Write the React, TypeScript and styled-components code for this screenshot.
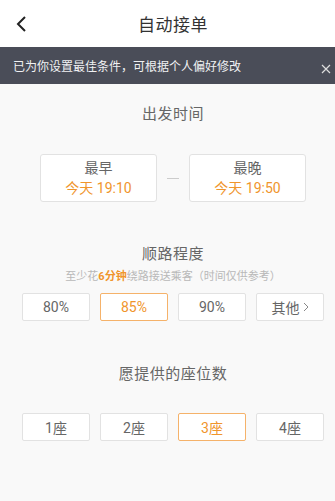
import React from "react";
import styled, { createGlobalStyle } from "styled-components";

const Global = createGlobalStyle`
  html, body { margin: 0; padding: 0; background: #f9f9f9; }
  body { font-family: "Roboto", "Noto Sans CJK SC", sans-serif; }
  * { box-sizing: border-box; }
`;

const Page = styled.div`
  width: 335px;
  height: 501px;
  background: #f9f9f9;
  overflow: hidden;
`;

const Header = styled.div`
  height: 47px;
  background: #fff;
  display: flex;
  align-items: center;
  justify-content: center;
  padding-left: 11px;
  position: relative;
`;

const Title = styled.div`
  font-size: 17px;
  color: #333;
  letter-spacing: 0.5px;
`;

const Back = styled.div`
  position: absolute;
  left: 15px;
  top: 15px;
  width: 14px;
  height: 18px;
`;

const Banner = styled.div`
  height: 37px;
  background: #4a4d58;
  display: flex;
  align-items: center;
  justify-content: space-between;
  padding: 0 3px 0 13px;
  color: #f0f1f3;
  font-size: 12px;
`;

const Close = styled.div`
  width: 12px;
  height: 12px;
  display: flex;
  margin-top: 6px;
`;

const Section = styled.div<{ $top: number }>`
  display: flex;
  flex-direction: column;
  align-items: center;
  padding-left: 11px;
  padding-top: ${(p) => p.$top}px;
`;

const SectionTitle = styled.div`
  font-size: 15px;
  color: #666;
  line-height: 20px;
  letter-spacing: 0.5px;
`;

const TimeRow = styled.div`
  display: flex;
  align-items: center;
  gap: 10px;
  margin-top: 30px;
`;

const TimeBox = styled.div`
  width: 117px;
  height: 48px;
  background: #fff;
  border: 1px solid #e2e2e2;
  border-radius: 3px;
  display: flex;
  flex-direction: column;
  align-items: center;
  justify-content: center;
  gap: 2px;
`;

const TimeLabel = styled.div`
  font-size: 14px;
  color: #666;
  line-height: 18px;
`;

const TimeValue = styled.div`
  font-size: 14px;
  color: #f0952c;
  line-height: 18px;
`;

const Dash = styled.div`
  width: 12px;
  height: 1px;
  background: #ccc;
`;

const Sub = styled.div`
  margin-top: 5px;
  font-size: 11px;
  color: #b8b8b8;
  line-height: 16px;
`;

const Hi = styled.span`
  color: #f0952c;
  font-weight: bold;
`;

const OptRow = styled.div<{ $mt: number }>`
  display: flex;
  gap: 10px;
  margin-top: ${(p) => p.$mt}px;
`;

const Opt = styled.div<{ $on?: boolean }>`
  width: 68px;
  height: 28px;
  background: #fff;
  border: 1px solid ${(p) => (p.$on ? "#f5b26a" : "#e2e2e2")};
  border-radius: 2px;
  display: flex;
  align-items: center;
  justify-content: center;
  font-size: 14px;
  color: ${(p) => (p.$on ? "#f0952c" : "#666")};
`;

const Arrow = styled.span`
  margin-left: 3px;
  display: flex;
`;

export default function App() {
  return (
    <Page>
      <Global />
      <Header>
        <Back>
          <svg width="14" height="18" viewBox="0 0 14 18">
            <path d="M10 2 L3 9 L10 16" fill="none" stroke="#222" strokeWidth="2" />
          </svg>
        </Back>
        <Title>自动接单</Title>
      </Header>
      <Banner>
        <span>已为你设置最佳条件，可根据个人偏好修改</span>
        <Close>
          <svg width="12" height="12" viewBox="0 0 12 12">
            <path d="M2 2 L10 10 M10 2 L2 10" stroke="#ddd" strokeWidth="1.2" />
          </svg>
        </Close>
      </Banner>
      <Section $top={20}>
        <SectionTitle>出发时间</SectionTitle>
        <TimeRow>
          <TimeBox>
            <TimeLabel>最早</TimeLabel>
            <TimeValue>今天 19:10</TimeValue>
          </TimeBox>
          <Dash />
          <TimeBox>
            <TimeLabel>最晚</TimeLabel>
            <TimeValue>今天 19:50</TimeValue>
          </TimeBox>
        </TimeRow>
      </Section>
      <Section $top={42}>
        <SectionTitle>顺路程度</SectionTitle>
        <Sub>
          至少花<Hi>6分钟</Hi>绕路接送乘客（时间仅供参考）
        </Sub>
        <OptRow $mt={8}>
          <Opt>80%</Opt>
          <Opt $on>85%</Opt>
          <Opt>90%</Opt>
          <Opt>
            其他
            <Arrow>
              <svg width="6" height="10" viewBox="0 0 6 10">
                <path d="M1 1 L5 5 L1 9" fill="none" stroke="#888" strokeWidth="1" />
              </svg>
            </Arrow>
          </Opt>
        </OptRow>
      </Section>
      <Section $top={43}>
        <SectionTitle>愿提供的座位数</SectionTitle>
        <OptRow $mt={29}>
          <Opt>1座</Opt>
          <Opt>2座</Opt>
          <Opt $on>3座</Opt>
          <Opt>4座</Opt>
        </OptRow>
      </Section>
    </Page>
  );
}
